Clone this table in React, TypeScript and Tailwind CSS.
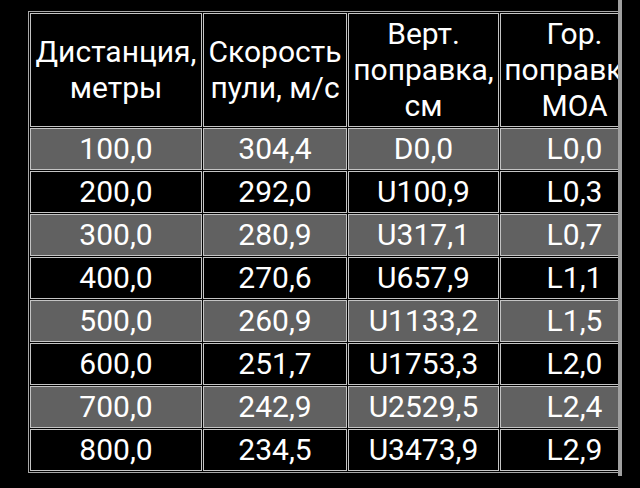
import React from "react";

const rows: [string, string, string, string][] = [
  ["100,0", "304,4", "D0,0", "L0,0"],
  ["200,0", "292,0", "U100,9", "L0,3"],
  ["300,0", "280,9", "U317,1", "L0,7"],
  ["400,0", "270,6", "U657,9", "L1,1"],
  ["500,0", "260,9", "U1133,2", "L1,5"],
  ["600,0", "251,7", "U1753,3", "L2,0"],
  ["700,0", "242,9", "U2529,5", "L2,4"],
  ["800,0", "234,5", "U3473,9", "L2,9"],
];

const cell =
  "border border-[#c4c4c4] px-[3px] py-[2px] text-center align-middle whitespace-nowrap";

export default function App() {
  return (
    <div
      className="w-[640px] h-[488px] bg-black flex text-white overflow-hidden"
      style={{ fontFamily: "Roboto, 'Noto Sans', sans-serif" }}
    >
      <div className="w-[618px] shrink-0 overflow-hidden pl-[28px] pt-[11px]">
        <table className="border-separate border-spacing-[1px] border border-[#a8a8a8] text-[30px] leading-[36px]">
          <thead>
            <tr>
              <th className={`${cell} font-normal w-[172px] min-w-[172px]`}>
                Дистанция,
                <br />
                метры
              </th>
              <th className={`${cell} font-normal w-[144px] min-w-[144px]`}>
                Скорость
                <br />
                пули, м/с
              </th>
              <th className={`${cell} font-normal w-[151px] min-w-[151px]`}>
                Верт.
                <br />
                поправка,
                <br />
                см
              </th>
              <th className={`${cell} font-normal w-[149px] min-w-[149px]`}>
                Гор.
                <br />
                поправка,
                <br />
                МОА
              </th>
            </tr>
          </thead>
          <tbody>
            {rows.map((r, i) => (
              <tr key={r[0]} className={i % 2 === 0 ? "bg-[#616161]" : "bg-black"}>
                {r.map((v, j) => (
                  <td key={j} className={cell}>
                    {v}
                  </td>
                ))}
              </tr>
            ))}
          </tbody>
        </table>
      </div>
      <div className="w-[4px] h-[476px] shrink-0 bg-[#a0a0a0]" />
    </div>
  );
}
